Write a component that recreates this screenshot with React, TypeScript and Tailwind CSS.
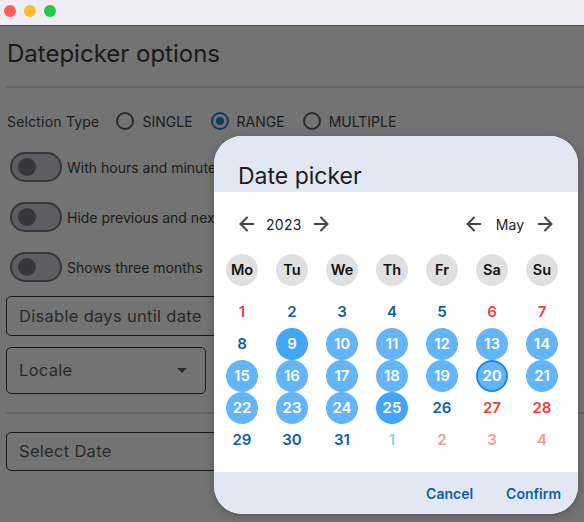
import React from "react";
import { ArrowLeft, ArrowRight } from "lucide-react";

const font = { fontFamily: "Inter, 'Noto Sans', sans-serif" };

function Toggle({ label }: { label: string }) {
  return (
    <div className="flex items-center h-[30px]">
      <div className="w-[52px] h-[30px] rounded-full border-2 border-[#37373b] bg-[#5e5e62] flex items-center pl-[6px] shrink-0">
        <div className="w-[18px] h-[18px] rounded-full bg-[#37373b]" />
      </div>
      <span className="ml-[5px] text-[14px] text-[#1c1c1c] whitespace-nowrap">{label}</span>
    </div>
  );
}

function Radio({ label, checked }: { label: string; checked?: boolean }) {
  return (
    <div className="flex items-center">
      <div
        className={
          checked
            ? "w-[18px] h-[18px] rounded-full border-2 border-[#0e3a5e] flex items-center justify-center"
            : "w-[18px] h-[18px] rounded-full border-2 border-[#2a2a2c]"
        }
      >
        {checked && <div className="w-[8px] h-[8px] rounded-full bg-[#0e3a5e]" />}
      </div>
      <span className="ml-[8px] text-[14px] text-[#1c1c1c]">{label}</span>
    </div>
  );
}

type Day = { n: number; kind: "normal" | "weekend" | "range" | "end" | "today" | "nextBlue" | "nextRed" };

const rows: Day[][] = [
  [
    { n: 1, kind: "weekend" },
    { n: 2, kind: "normal" },
    { n: 3, kind: "normal" },
    { n: 4, kind: "normal" },
    { n: 5, kind: "normal" },
    { n: 6, kind: "weekend" },
    { n: 7, kind: "weekend" },
  ],
  [
    { n: 8, kind: "normal" },
    { n: 9, kind: "end" },
    { n: 10, kind: "range" },
    { n: 11, kind: "range" },
    { n: 12, kind: "range" },
    { n: 13, kind: "range" },
    { n: 14, kind: "range" },
  ],
  [
    { n: 15, kind: "range" },
    { n: 16, kind: "range" },
    { n: 17, kind: "range" },
    { n: 18, kind: "range" },
    { n: 19, kind: "range" },
    { n: 20, kind: "today" },
    { n: 21, kind: "range" },
  ],
  [
    { n: 22, kind: "range" },
    { n: 23, kind: "range" },
    { n: 24, kind: "range" },
    { n: 25, kind: "end" },
    { n: 26, kind: "normal" },
    { n: 27, kind: "weekend" },
    { n: 28, kind: "weekend" },
  ],
  [
    { n: 29, kind: "normal" },
    { n: 30, kind: "normal" },
    { n: 31, kind: "normal" },
    { n: 1, kind: "nextBlue" },
    { n: 2, kind: "nextRed" },
    { n: 3, kind: "nextRed" },
    { n: 4, kind: "nextRed" },
  ],
];

function DayCell({ d }: { d: Day }) {
  let cls = "w-[32px] h-[32px] rounded-full flex items-center justify-center text-[15px] font-semibold";
  switch (d.kind) {
    case "normal":
      cls += " text-[#0b5ea8]";
      break;
    case "weekend":
      cls += " text-[#f2403a]";
      break;
    case "range":
      cls += " bg-[#64b5f6] text-white";
      break;
    case "end":
      cls += " bg-[#42a5f5] text-white";
      break;
    case "today":
      cls += " bg-[#64b5f6] text-white border-2 border-[#1e88e5]";
      break;
    case "nextBlue":
      cls += " text-[#90caf9]";
      break;
    case "nextRed":
      cls += " text-[#ef9a9a]";
      break;
  }
  return (
    <div className="flex items-center justify-center h-[32px]">
      <div className={cls}>{d.n}</div>
    </div>
  );
}

export default function App() {
  const weekdays = ["Mo", "Tu", "We", "Th", "Fr", "Sa", "Su"];
  return (
    <div className="w-[584px] h-[522px] relative overflow-hidden bg-[#737373]" style={font}>
      {/* title bar */}
      <div className="h-[26px] bg-[#efedf4] border-b border-[#555] flex items-center pl-[4px] pb-[3px] gap-[8px]">
        <div className="w-[12px] h-[12px] rounded-full bg-[#fe5f57]" />
        <div className="w-[12px] h-[12px] rounded-full bg-[#febc2e]" />
        <div className="w-[12px] h-[12px] rounded-full bg-[#28c840]" />
      </div>

      {/* page */}
      <div className="pl-[6px]">
        <div className="h-[55px] flex items-center pl-[1px] text-[24px] text-[#1a1a1a]">
          Datepicker options
        </div>
        <div className="mt-[5px] h-[2px] bg-[#666666]" />

        <div className="flex items-center mt-[24px] h-[18px]">
          <span className="pl-[1px] text-[14px] text-[#1c1c1c] tracking-[0.2px]">Selction Type</span>
          <div className="ml-[17px] flex items-center gap-[18px]">
            <Radio label="SINGLE" />
            <Radio label="RANGE" checked />
            <Radio label="MULTIPLE" />
          </div>
        </div>

        <div className="pl-[4px] mt-[22px] flex flex-col gap-[20px]">
          <Toggle label="With hours and minutes" />
          <Toggle label="Hide previous and next" />
          <Toggle label="Shows three months" />
        </div>

        <div className="mt-[14px] w-[260px] h-[40px] border border-[#1a1a1a] rounded-[5px] flex items-center pl-[12px] text-[16.5px] text-[#2a2a2a] tracking-[0.3px]">
          Disable days until date
        </div>

        <div className="mt-[11px] w-[200px] h-[47px] border border-[#1a1a1a] rounded-[5px] flex items-center justify-between pl-[12px] pr-[18px] text-[16.5px] text-[#2a2a2a] tracking-[0.3px]">
          <span>Locale</span>
          <div className="w-0 h-0 border-l-[5px] border-r-[5px] border-t-[5px] border-l-transparent border-r-transparent border-t-[#2a2a2a]" />
        </div>

        <div className="mt-[18px] h-[2px] bg-[#666666]" />

        <div className="mt-[18px] w-[260px] h-[39px] border border-[#1a1a1a] rounded-[5px] flex items-center pl-[12px] text-[16.5px] text-[#2a2a2a] tracking-[0.3px]">
          Select Date
        </div>
      </div>

      {/* dialog */}
      <div className="absolute left-[214px] top-[136px] w-[364px] h-[378px] rounded-[28px] overflow-hidden bg-white flex flex-col shadow-[0_2px_8px_rgba(0,0,0,0.25)]">
        <div className="h-[56px] bg-[#e1e8f4] pl-[24px] pt-[29px] text-[23px] leading-[23px] text-[#1c1c1c]">
          Date picker
        </div>
        <div className="flex-1 flex flex-col">
          <div className="h-[32px] mt-[16px] flex items-center justify-between pl-[22px] pr-[22px]">
            <div className="flex items-center">
              <ArrowLeft size={22} strokeWidth={2.2} color="#454549" />
              <span className="ml-[8px] mr-[8px] text-[14px] text-[#222] tracking-[0.3px]">2023</span>
              <ArrowRight size={22} strokeWidth={2.2} color="#454549" />
            </div>
            <div className="flex items-center">
              <ArrowLeft size={22} strokeWidth={2.2} color="#454549" />
              <span className="ml-[11px] mr-[10px] text-[14px] text-[#222]">May</span>
              <ArrowRight size={22} strokeWidth={2.2} color="#454549" />
            </div>
          </div>

          <div className="ml-[3px] mt-[14px] grid grid-cols-[repeat(7,50px)]">
            {weekdays.map((w) => (
              <div key={w} className="flex items-center justify-center h-[32px]">
                <div className="w-[32px] h-[32px] rounded-full bg-[#e0e0e0] flex items-center justify-center text-[14.5px] font-semibold text-[#111]">
                  {w}
                </div>
              </div>
            ))}
          </div>

          <div className="ml-[3px] mt-[10px] grid grid-cols-[repeat(7,50px)]">
            {rows.flat().map((d, i) => (
              <DayCell key={i} d={d} />
            ))}
          </div>
        </div>
        <div className="h-[42px] bg-[#e1e8f4] flex items-start justify-end pr-[17px] pt-[11px] gap-[33px] text-[14px] font-semibold text-[#0b5ea8]">
          <span>Cancel</span>
          <span>Confirm</span>
        </div>
      </div>
    </div>
  );
}
